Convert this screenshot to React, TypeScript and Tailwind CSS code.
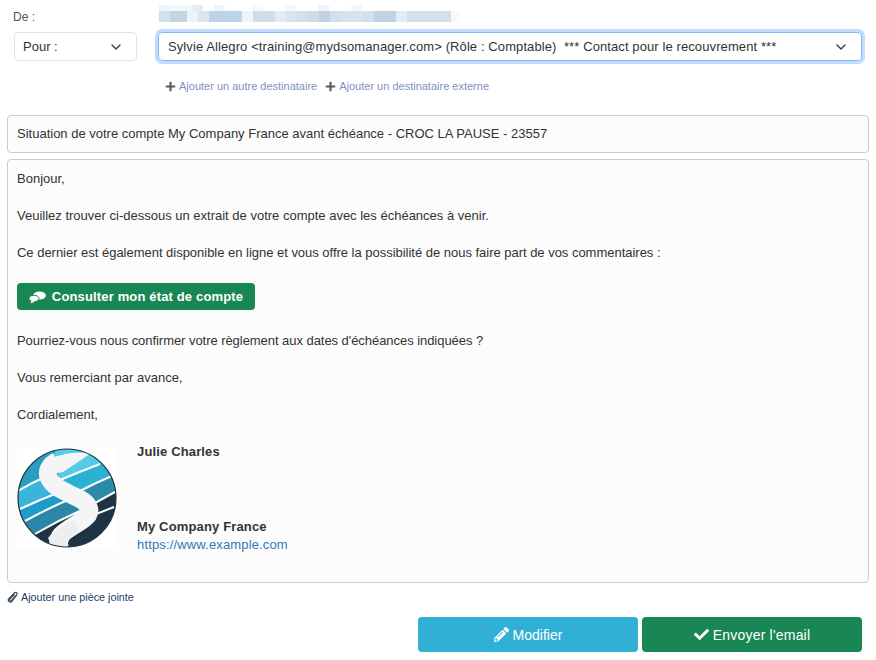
import { ChevronDown } from 'lucide-react';
import { FaCheck, FaPencilAlt, FaPlus } from 'react-icons/fa';

const BlurredSender = () => {
  const top: [number, number, string][] = [
    [0, 11, '#edf3f8'], [11, 11, '#f6f9fb'], [22, 11, '#f1f6f9'], [33, 11, '#e6eef5'],
    [55, 11, '#f0f5f9'], [93, 11, '#f6f9fb'], [126, 11, '#f5f8fb'], [159, 11, '#eff4f8'], [192, 11, '#f4f7fa'],
  ];
  const bottom: [number, number, string][] = [
    [0, 11, '#d3e1ec'], [11, 17, '#c0d5e6'], [28, 11, '#eef3f7'], [39, 11, '#dbe6ef'],
    [50, 33, '#bed3e5'], [83, 11, '#eef4f8'], [94, 22, '#cfdeea'],
    [116, 11, '#e4ecf3'], [127, 11, '#d9e4ee'], [138, 11, '#d3e0eb'], [149, 11, '#cddcea'], [160, 11, '#bfd3e4'],
    [171, 11, '#d3e0eb'], [182, 22, '#d6e2ec'], [204, 11, '#d3e0eb'], [215, 22, '#bfd3e4'],
    [237, 11, '#e4ecf3'], [248, 22, '#d3e0eb'], [270, 22, '#d3e0eb'],
    [292, 8, '#f7f9fb'],
  ];
  return (
    <svg width="300" height="17" viewBox="0 0 300 17" className="block">
      {top.map(([x, w, c]) => (
        <rect key={x} x={x} y="0" width={w} height="6" fill={c} />
      ))}
      {bottom.map(([x, w, c]) => (
        <rect key={x} x={x} y="6" width={w} height="11" fill={c} />
      ))}
    </svg>
  );
};

const Logo = () => (
  <svg width="100" height="100" viewBox="0 0 100 100" className="block bg-white">
    <defs>
      <clipPath id="disc">
        <circle cx="50" cy="50" r="49" />
      </clipPath>
    </defs>
    <g clipPath="url(#disc)">
      <rect width="100" height="100" fill="#1f3442" />
      <path d="M30 0 L100 0 L100 10 L81 17 L43 32Z" fill="#55cbe8" />
      <path d="M43 32 L81 17 L100 10 L100 27 L65 42Z" fill="#2bb0d6" />
      <path d="M65 42 L100 27 L100 43 L75 57Z" fill="#2a8aa8" />
      <path d="M0 0 L40 0 L26 30 L0 44Z" fill="#2a9cc0" />
      <path d="M0 44 L26 30 L44 44 L0 62Z" fill="#38b5d9" />
      <path d="M0 62 L41 45 L51 52 L5 75Z" fill="#1c9cc6" />
      <path d="M5 75 L51 52 L65 62 L15 87Z" fill="#2b87a7" />
      <g fill="none" stroke="#ffffff" strokeWidth="2">
        <path d="M1 43 Q14 35 28 29" />
        <path d="M3 61 Q22 52 43 44" />
        <path d="M8 73 Q30 61 53 51" />
        <path d="M18 86 Q42 72 67 61" />
        <path d="M43 32 Q62 24 83 16" />
        <path d="M63 43 Q78 35 95 28" />
        <path d="M73 58 Q85 51 98 44" />
        <path d="M79 66 Q87 63 97 59" />
      </g>
      <path d="M74 5 C60 3 38 6 28 14 L34 26 L46 24 C56 17 66 11 74 5Z" fill="#f3f5f6" />
      <path
        d="M40 13 C32 17 29 24 32 30 C36 40 52 45 63 51 C72 56 74 62 71 67 C66 74 52 79 44 87 C40 92 41 97 44 102"
        fill="none"
        stroke="#f3f5f6"
        strokeWidth="18"
      />
      <path d="M31 90 C38 82 50 76 58 72 L62 84 C54 88 50 92 51 100 L36 100Z" fill="#eceff1" />
    </g>
    <circle cx="50" cy="50" r="49" fill="none" stroke="#24343f" strokeWidth="1.2" />
  </svg>
);

const ChatIcon = () => (
  <svg width="17" height="13" viewBox="0 0 17 13" fill="#ffffff" className="mr-[6px] mt-[1px] shrink-0">
    <ellipse cx="10.5" cy="4.5" rx="6.5" ry="4" />
    <ellipse cx="5" cy="7.5" rx="5" ry="3.2" stroke="#198754" strokeWidth="1" />
    <path d="M2.5 9.5 L1.5 12.5 L6 10.5Z" />
  </svg>
);

const ClipIcon = () => (
  <svg width="12" height="12" viewBox="0 0 12 12" fill="none" stroke="#3a4a55" strokeWidth="1.2" className="mr-[2px] shrink-0">
    <path d="M1.5 8 L7.5 2 C9 0.5 11 2.2 9.7 3.8 L4 9.8 C3 10.8 1.5 9.6 2.5 8.3 L7.5 3.5" />
    <path d="M9.7 3.8 L4.8 10.5 C3.2 11.8 0.4 10.2 1.5 8" />
  </svg>
);

export default function App() {
  return (
    <div className="w-[876px] h-[660px] bg-white overflow-hidden px-[7px] text-[13px] leading-[18px] text-[#333333] font-['Liberation_Sans',Arial,sans-serif]">
      <div className="flex">
        <div className="w-[151px] pl-[6px] pt-[9px]">
          <div className="text-[12px] text-[#555555] leading-[17px]">De :</div>
          <div className="ml-px mt-[6px] flex h-[29px] w-[123px] items-center justify-between rounded-[4px] border border-[#dee2e6] pl-2 pr-[12px]">
            <span>Pour :</span>
            <ChevronDown size={16} strokeWidth={2} className="text-[#343a40]" />
          </div>
        </div>
        <div className="pt-[5px]">
          <div className="h-[27px] pl-px">
            <BlurredSender />
          </div>
          <div className="flex h-[29px] w-[704px] items-center justify-between whitespace-pre rounded-[4px] border border-[#86b7fe] pl-[9px] pr-[12px] shadow-[0_0_0_3px_#c2dbfe]">
            <span className="tracking-[0.1px]">Sylvie Allegro &lt;training@mydsomanager.com&gt; (Rôle : Comptable)  *** Contact pour le recouvrement ***</span>
            <ChevronDown size={16} strokeWidth={2} className="text-[#343a40]" />
          </div>
          <div className="mt-[16px] flex h-[18px] items-center pl-[7px] text-[11px] text-[#7f8fc4]">
            <FaPlus size={11} className="mr-[3px] text-[#555555]" />
            <span>Ajouter un autre destinataire</span>
            <FaPlus size={11} className="ml-[8px] mr-[3px] text-[#555555]" />
            <span>Ajouter un destinataire externe</span>
          </div>
        </div>
      </div>

      <div className="mt-[20px] flex h-[38px] items-center rounded-[4px] border border-[#cccccc] bg-[#fcfcfc] pl-[9px]">
        Situation de votre compte My Company France avant échéance - CROC LA PAUSE - 23557
      </div>

      <div className="mt-[6px] h-[424px] rounded-[4px] border border-[#cccccc] bg-[#fcfcfc] pl-[9px] pt-[10px]">
        <p>Bonjour,</p>
        <p className="mt-[19px]">Veuillez trouver ci-dessous un extrait de votre compte avec les échéances à venir.</p>
        <p className="mt-[19px] tracking-[-0.02px]">Ce dernier est également disponible en ligne et vous offre la possibilité de nous faire part de vos commentaires :</p>
        <div className="mt-[21px] flex h-[27px] w-[238px] items-center justify-center rounded-[4px] bg-[#198754] font-bold tracking-[0.15px] text-white">
          <ChatIcon />
          Consulter mon état de compte
        </div>
        <p className="mt-[22px] tracking-[-0.05px]">Pourriez-vous nous confirmer votre règlement aux dates d'échéances indiquées ?</p>
        <p className="mt-[19px]">Vous remerciant par avance,</p>
        <p className="mt-[19px]">Cordialement,</p>
        <div className="mt-[24px] flex">
          <Logo />
          <div className="ml-5 mt-[-5px] tracking-[0.15px]">
            <div className="font-bold">Julie Charles</div>
            <div className="mt-[57px] font-bold">My Company France</div>
            <div className="text-[#337ab7]">https://www.example.com</div>
          </div>
        </div>
      </div>

      <div className="mt-[6px] flex h-[16px] items-center text-[10.8px] text-[#1b3f66]">
        <ClipIcon />
        Ajouter une pièce jointe
      </div>

      <div className="mt-[12px] flex justify-end gap-1 pr-[7px] text-[14px] text-white">
        <div className="flex h-[35px] w-[220px] items-center justify-center rounded-[4px] bg-[#31b0d5]">
          <FaPencilAlt size={15} className="mr-1" />
          Modifier
        </div>
        <div className="flex h-[35px] w-[220px] items-center justify-center rounded-[4px] bg-[#198754] tracking-[0.2px]">
          <FaCheck size={15} className="mr-1" />
          Envoyer l'email
        </div>
      </div>
    </div>
  );
}
